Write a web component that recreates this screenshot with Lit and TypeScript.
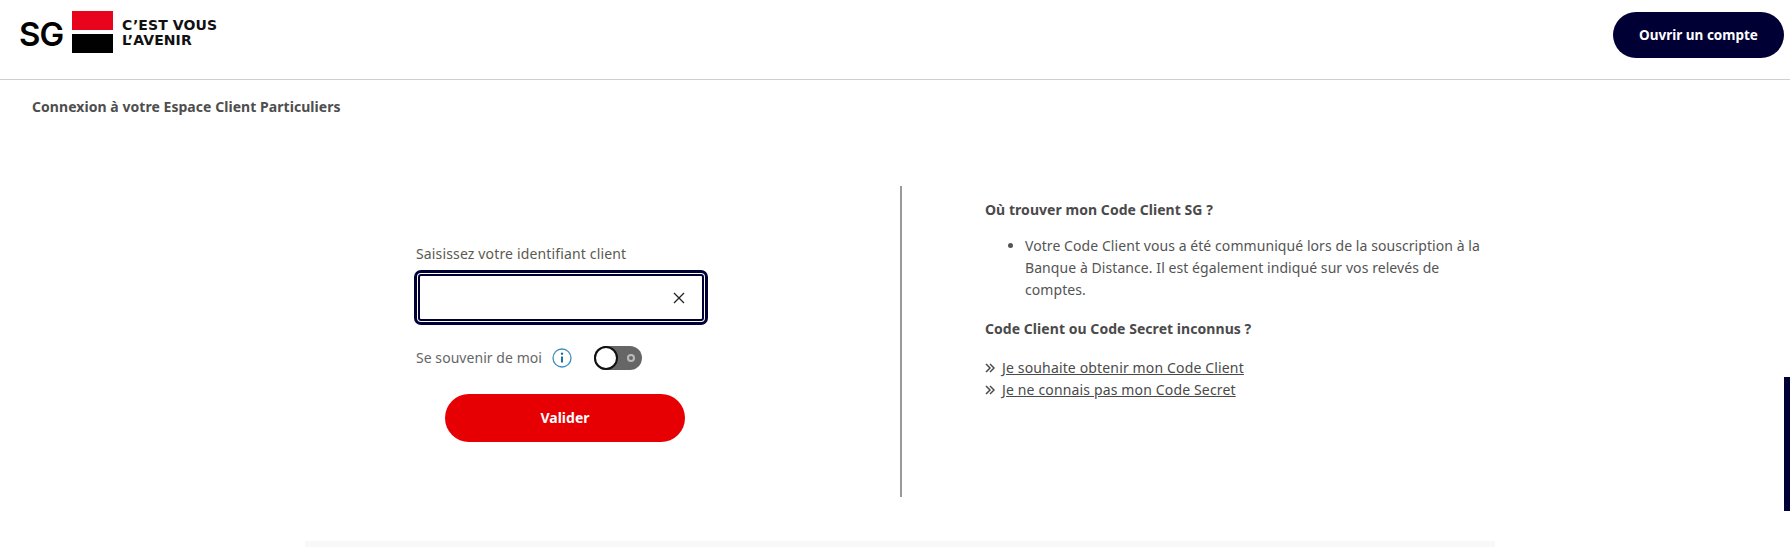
import { LitElement, css, html } from "lit";
import { customElement } from "lit/decorators.js";

@customElement("app-root")
export class AppRoot extends LitElement {
  static styles = css`
    :host {
      display: block;
      position: relative;
      height: 547px;
      overflow: hidden;
      background: #fff;
      color: #545454;
      font-family: "Noto Sans", "Open Sans", sans-serif;
      font-size: 14px;
      line-height: 22px;
      letter-spacing: 0.15px;
    }
    .header {
      height: 80px;
      box-sizing: border-box;
      border-bottom: 1px solid #cfcfcf;
      display: flex;
      align-items: flex-start;
      justify-content: space-between;
      padding: 11px 6px 0 19px;
    }
    .brand {
      display: flex;
      align-items: flex-start;
    }
    .sg {
      font-family: "Inter", sans-serif;
      font-size: 33px;
      line-height: 32px;
      letter-spacing: -1px;
      font-weight: 600;
      color: #010101;
      margin: 7px 10px 0 0;
      width: 43px;
    }
    .flag {
      width: 41px;
      display: flex;
      flex-direction: column;
      gap: 4px;
    }
    .flag i {
      display: block;
      height: 19px;
    }
    .flag .red {
      background: #e9041e;
    }
    .flag .black {
      background: #010101;
    }
    .tagline {
      font-family: "DejaVu Sans", sans-serif;
      font-weight: 700;
      font-size: 14px;
      line-height: 14.5px;
      letter-spacing: 0.1px;
      color: #111;
      margin: 7px 0 0 9px;
    }
    .open {
      width: 171px;
      height: 46px;
      margin-top: 1px;
      border: 0;
      border-radius: 23px;
      background: #010035;
      color: #fff;
      font: 700 13.5px/22px "Noto Sans", sans-serif;
      padding: 0;
    }
    .title {
      font-weight: 700;
      font-size: 14px;
      line-height: 22px;
      letter-spacing: 0.05px;
      padding: 16px 0 0 32px;
      color: #4e4e4e;
    }
    .main {
      display: grid;
      grid-template-columns: 595px 2px 1fr;
      margin: 68px 0 0 305px;
      width: 1190px;
      height: 311px;
    }
    .form {
      padding: 57px 0 0 111px;
    }
    .label {
      color: #5a5a50;
    }
    .field {
      width: 294px;
      height: 55px;
      box-sizing: border-box;
      margin: 5px 0 0 -2px;
      border: 3px solid #010035;
      border-radius: 7px;
      padding: 1px;
    }
    .field-inner {
      height: 100%;
      box-sizing: border-box;
      border: 2px solid #010035;
      border-radius: 3px;
      display: flex;
      align-items: center;
      justify-content: flex-end;
      padding-right: 17px;
    }
    .field svg {
      display: block;
    }
    .remember {
      display: flex;
      align-items: center;
      height: 24px;
      margin-top: 21px;
      color: #666;
      letter-spacing: 0.05px;
    }
    .info {
      margin-left: 10px;
      display: block;
    }
    .toggle {
      margin-left: 22px;
      width: 48px;
      height: 24px;
      box-sizing: border-box;
      border-radius: 12px;
      background: #666;
      position: relative;
    }
    .knob {
      position: absolute;
      left: 0;
      top: 0;
      width: 24px;
      height: 24px;
      box-sizing: border-box;
      border: 2px solid #111;
      border-radius: 50%;
      background: #fff;
    }
    .dot {
      position: absolute;
      right: 7px;
      top: 8px;
      width: 8px;
      height: 8px;
      box-sizing: border-box;
      border: 2px solid #bbb;
      border-radius: 50%;
    }
    .submit {
      display: block;
      width: 240px;
      height: 48px;
      margin: 24px 0 0 29px;
      border: 0;
      border-radius: 24px;
      background: #e60003;
      color: #fff;
      font: 700 14px/22px "Noto Sans", sans-serif;
      padding: 0;
    }
    .divider {
      background: #999;
      width: 2px;
    }
    .help {
      padding: 13px 0 0 83px;
    }
    .help h2 {
      margin: 0;
      font-size: 14px;
      line-height: 22px;
      font-weight: 700;
      letter-spacing: 0.05px;
      color: #4a4a4a;
    }
    .help ul {
      margin: 14px 0 17px;
      padding: 0 0 0 40px;
      letter-spacing: 0.07px;
    }
    .links {
      margin-top: 17px;
    }
    .links div {
      display: flex;
      align-items: center;
      gap: 7px;
    }
    .links a {
      color: #4a4a4a;
      text-decoration: underline;
    }
    .links svg {
      display: block;
    }
    .strip {
      position: absolute;
      left: 305px;
      top: 541px;
      width: 1190px;
      height: 6px;
      background: #f8f8f8;
    }
    .tab {
      position: absolute;
      right: 0;
      top: 377px;
      width: 6px;
      height: 134px;
      background: #010035;
    }
  `;

  private chevrons() {
    return html`<svg width="10" height="10" viewBox="0 0 10 10" fill="none" stroke="#4a4a4a" stroke-width="1.5">
      <path d="M1 1l4 4-4 4M5 1l4 4-4 4" />
    </svg>`;
  }

  render() {
    return html`
      <div class="header">
        <div class="brand">
          <div class="sg">SG</div>
          <div class="flag"><i class="red"></i><i class="black"></i></div>
          <div class="tagline">C’EST VOUS<br />L’AVENIR</div>
        </div>
        <button class="open">Ouvrir un compte</button>
      </div>
      <div class="title">Connexion à votre Espace Client Particuliers</div>
      <div class="main">
        <div class="form">
          <div class="label">Saisissez votre identifiant client</div>
          <div class="field">
            <div class="field-inner">
              <svg width="12" height="12" viewBox="0 0 12 12" fill="none" stroke="#222" stroke-width="1.3">
                <path d="M1 1l10 10M11 1L1 11" />
              </svg>
            </div>
          </div>
          <div class="remember">
            <span>Se souvenir de moi</span>
            <svg class="info" width="20" height="20" viewBox="0 0 20 20" fill="none">
              <circle cx="10" cy="10" r="9" stroke="#3d8fbf" stroke-width="1.3" />
              <path d="M10 8.5v6" stroke="#1f6f9f" stroke-width="2" />
              <circle cx="10" cy="5.8" r="1.2" fill="#1f6f9f" />
            </svg>
            <div class="toggle"><span class="knob"></span><span class="dot"></span></div>
          </div>
          <button class="submit">Valider</button>
        </div>
        <div class="divider"></div>
        <div class="help">
          <h2>Où trouver mon Code Client SG ?</h2>
          <ul>
            <li>Votre Code Client vous a été communiqué lors de la souscription à la Banque à Distance. Il est également indiqué sur vos relevés de comptes.</li>
          </ul>
          <h2>Code Client ou Code Secret inconnus ?</h2>
          <div class="links">
            <div>${this.chevrons()}<a href="#">Je souhaite obtenir mon Code Client</a></div>
            <div>${this.chevrons()}<a href="#">Je ne connais pas mon Code Secret</a></div>
          </div>
        </div>
      </div>
      <div class="strip"></div>
      <div class="tab"></div>
    `;
  }
}
